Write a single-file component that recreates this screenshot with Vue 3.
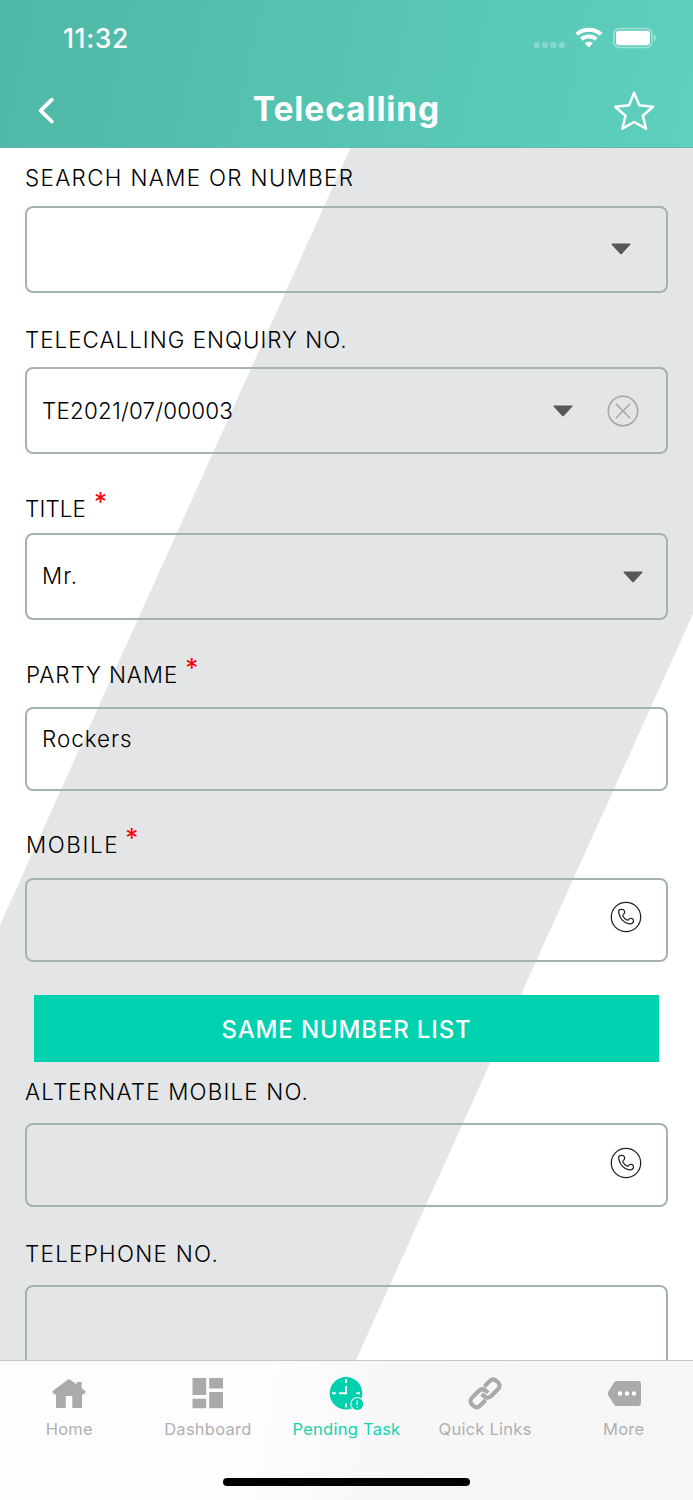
<script setup>
const fields = [
  { id: 'search', label: 'SEARCH NAME OR NUMBER', value: '', icon: 'caret' },
  { id: 'enquiry', label: 'TELECALLING ENQUIRY NO.', value: 'TE2021/07/00003', icon: 'caret', clear: true },
  { id: 'title', label: 'TITLE', required: true, value: 'Mr.', icon: 'caret' },
  { id: 'party', label: 'PARTY NAME', required: true, value: 'Rockers' },
  { id: 'mobile', label: 'MOBILE', required: true, value: '', icon: 'phone', button: 'SAME NUMBER LIST' },
  { id: 'alternate', label: 'ALTERNATE MOBILE NO.', value: '', icon: 'phone' },
  { id: 'telephone', label: 'TELEPHONE NO.', value: '' },
]
const tabs = [
  { id: 'home', label: 'Home' },
  { id: 'dashboard', label: 'Dashboard' },
  { id: 'pending', label: 'Pending Task', active: true },
  { id: 'links', label: 'Quick Links' },
  { id: 'more', label: 'More' },
]
</script>

<template>
  <div class="screen">
    <header class="header">
      <div class="status">
        <span class="time">11:32</span>
        <svg class="status-icons" width="126" height="24" viewBox="0 0 126 24" fill="#fff">
          <g opacity=".25">
            <rect x="3.7" y="16" width="6" height="6" rx="1.8" />
            <rect x="12" y="16" width="6" height="6" rx="1.8" />
            <rect x="20.4" y="16" width="6" height="6" rx="1.8" />
            <rect x="28.8" y="16" width="6" height="6" rx="1.8" />
          </g>
          <g fill="none" stroke="#fff" stroke-width="4">
            <path d="M46.8 8.2C53.5 2.2 64.2 2.2 70.9 8.2" />
            <path d="M51.4 13.2C55.5 9.5 62.2 9.5 66.3 13.2" />
          </g>
          <path d="M54.9 17.200C57 15.400 60.700 15.400 62.800 17.200L58.850 21.400Z" />
          <rect x="83.9" y="2.5" width="38" height="19" rx="5.5" fill="none" stroke="#fff" stroke-opacity=".42" stroke-width="1.5" />
          <rect x="86" y="4.8" width="34" height="14.4" rx="3" />
          <path d="M123.800 8.500c2.600 1.300 2.600 5.800 0 7z" opacity=".5" />
        </svg>
      </div>
      <div class="navbar">
        <svg class="back" width="20" height="30" viewBox="0 0 20 30" fill="none" stroke="#fff" stroke-width="3.8" stroke-linecap="round" stroke-linejoin="round">
          <path d="M14.8 3.7L3.6 14.6L14.8 25.5" />
        </svg>
        <h1>Telecalling</h1>
        <svg class="star" width="44" height="44" viewBox="0 0 44 44" fill="none" stroke="#fff" stroke-width="2.5" stroke-linejoin="round">
          <path d="M22.1 3.8L27.3 16.3L41 17.8L30.8 26.8L34.1 39.7L22.1 33L10.3 39.7L13.5 26.8L3.2 17.8L17 16.3Z" />
        </svg>
      </div>
    </header>

    <main class="form">
      <section v-for="f in fields" :key="f.id" class="field" :class="f.id">
        <div class="label">
          <span class="caption">{{ f.label }}</span>
          <span v-if="f.required" class="required">*</span>
        </div>
        <div class="box">
          <span class="value">{{ f.value }}</span>
          <svg v-if="f.icon === 'caret'" class="caret" width="20" height="12" viewBox="0 0 20 12">
            <path d="M1.200.500H18.800Q20.300.500 19.200 1.700L11 10.700Q10 11.800 9 10.700L.800 1.700Q-.300.500 1.200.500Z" fill="#575757" />
          </svg>
          <svg v-if="f.clear" class="clear" width="32" height="32" viewBox="0 0 32 32" fill="none" stroke="#a5a5a5" stroke-width="1.5" stroke-linecap="round">
            <circle cx="16" cy="16" r="14.7" />
            <path d="M9.3 9.3L22.7 22.7M22.7 9.3L9.3 22.7" />
          </svg>
          <svg v-if="f.icon === 'phone'" class="phone" width="32" height="32" viewBox="0 0 32 32" fill="none" stroke="#222" stroke-width="1.25" stroke-linejoin="round">
            <circle cx="16" cy="16" r="14.7" />
            <path d="M8.8 12.2C7.9 9.3 9.8 8 12.1 8.300C14.300 8.500 15.100 10.600 14.400 12.200C13.900 13.200 12.400 13.700 12.900 14.900C13.800 16.800 15.400 18.600 17.200 19.200C18.200 19.500 18.600 17.900 19.900 17.500C22.300 16.900 24 18.300 23.400 20.600C22.900 22.600 21.200 23.100 19 22.800C13.800 22 9.700 17.300 8.800 12.200Z" />
          </svg>
        </div>
        <button v-if="f.button" class="action"><span>{{ f.button }}</span></button>
      </section>
    </main>

    <footer class="tabbar">
      <nav class="tabs">
        <a v-for="t in tabs" :key="t.id" class="tab" :class="[t.id, { active: t.active }]">
          <svg class="tab-icon" width="36" height="36" viewBox="0 0 36 36" fill="#aaa">
            <path v-if="t.id === 'home'" d="M16.800 2.800Q18 1.900 19.200 2.800L25.700 7.500V5H30.700V11.200L34 13.800Q35.200 15 34 16.200Q33 17.600 31 17.500V31H21.300V19H14.800V31H5V17.500Q3 17.600 2 16.200Q.800 15 2 13.800Z" />
            <path v-if="t.id === 'dashboard'" d="M2.500 1H16.200V18.100H2.500ZM19.200 1H33V11.400H19.200ZM19.200 15H33V31.300H19.200ZM2.500 21.800H16.200V31.300H2.500Z" />
            <g v-if="t.id === 'pending'">
              <circle cx="18" cy="16.3" r="16.3" fill="#00d0ad" />
              <path d="M18 2.200V6M4 16.300H7.700M28.200 16.300H32M18 26.600V30.200M18 9V16.300H11" fill="none" stroke="#f9f9fa" stroke-width="2" />
              <circle cx="29.3" cy="27" r="7" fill="#fafafb" />
              <circle cx="29.3" cy="27" r="5.9" fill="#00d0ad" />
              <path d="M29.300 23.200V28M29.300 29.500V31" stroke="#fff" stroke-width="1.3" />
            </g>
            <g v-if="t.id === 'links'" fill="none" stroke="#aaa" stroke-width="4.2" stroke-linejoin="round">
              <path d="M17.300 9.600L22.400 4.400Q25.500 0.700 29.700 4.200Q34.700 8 31.100 12L24 19.200Q20.200 22.300 16.600 18.700L14.800 16.900" />
              <path d="M18.700 23.100L13.500 28.300Q9.700 32.300 6.100 28.600Q1.300 24.500 5.100 20.600L12 13.700Q15.900 10.600 19.300 14.100L21 15.900" />
            </g>
            <g v-if="t.id === 'more'">
              <path d="M10.500 3.900H31.700Q35 3.900 35 7V25.700Q35 28.900 31.700 28.900H10.500Q9 28.900 8 27.400L2.100 18Q1.300 16.400 2.100 14.900L8 5.400Q9 3.900 10.500 3.900Z" />
              <g fill="#fff"><circle cx="14" cy="16.5" r="2.2" /><circle cx="21" cy="16.5" r="2.2" /><circle cx="28" cy="16.5" r="2.2" /></g>
            </g>
          </svg>
          <span class="tab-label">{{ t.label }}</span>
        </a>
      </nav>
      <div class="home-indicator"></div>
    </footer>
  </div>
</template>

<style>
body { margin: 0; background: #fff; }
</style>

<style scoped>
.screen {
  display: flex;
  flex-direction: column;
  width: 693px;
  height: 1500px;
  overflow: hidden;
  background: #fff;
  font-family: Inter, "Liberation Sans", sans-serif;
}
.header {
  box-sizing: border-box;
  flex: none;
  height: 148px;
  background: linear-gradient(102deg, #4fb7a5 0%, #55c2af 42%, #5fd0be 100%);
  border-bottom: 1px solid #65b7a9;
  color: #fff;
}
.status {
  display: flex;
  justify-content: space-between;
  align-items: center;
  height: 76px;
  padding: 0 37px 0 63px;
}
.time { font-size: 26.5px; font-weight: 500; letter-spacing: .6px; }
.navbar {
  display: grid;
  grid-template-columns: 80px 1fr 80px;
  align-items: center;
  height: 70px;
}
.back { margin: -1px 0 0 37px; }
h1 {
  margin: 0;
  padding-bottom: 4px;
  text-align: center;
  font-size: 33.5px;
  font-weight: 700;
  line-height: 40px;
  letter-spacing: .9px;
}
.star { margin-left: -1px; }

.form {
  box-sizing: border-box;
  flex: none;
  height: 1212px;
  overflow: hidden;
  padding: 15px 25px 0;
  background: #e4e5e7;
  isolation: isolate;
  position: relative;
}
/* white corners on both sides of the slanted grey band */
.form::before {
  content: "";
  position: absolute;
  inset: 0;
  z-index: -1;
  background: #fff;
  clip-path: polygon(0 0, 350.5px 0, 0 777px, 0 1212px, 356px 1212px, 693px 466px, 693px 1212px, 0 1212px);
}
.label {
  display: flex;
  height: 30px;
  line-height: 30px;
  font-size: 22.4px;
  font-weight: 360;
  color: #000;
  white-space: nowrap;
}
.required {
  margin-left: 8px;
  color: #f00;
  font-size: 26px;
  font-weight: 400;
  line-height: 15px;
}
.box {
  box-sizing: border-box;
  display: flex;
  align-items: center;
  height: 87px;
  padding: 0 15px;
  border: 2px solid #a3b3af;
  border-radius: 8px;
  font-size: 22.4px;
  font-weight: 360;
  color: #000;
}
.value { flex: 1; }
.search .caption { letter-spacing: 1.35px; }
.search .box { margin-top: 13px; }
.enquiry { margin-top: 32px; }
.enquiry .caption { letter-spacing: 1px; }
.enquiry .box { margin-top: 12px; }
.enquiry .value { letter-spacing: .2px; }
.title { margin-top: 40px; }
.title .caption { letter-spacing: .15px; }
.title .box { margin-top: 9px; }
.title .value { padding-bottom: 3px; letter-spacing: 1px; }
.party { margin-top: 40px; }
.party .caption { margin-left: 1px; letter-spacing: .9px; }
.party .required { margin-left: 7px; }
.party .box { margin-top: 17px; height: 84px; padding-bottom: 22px; }
.party .value { letter-spacing: 1px; }
.mobile { margin-top: 39px; }
.mobile .caption { margin-left: 1px; letter-spacing: 1.6px; }
.mobile .required { margin-left: 6px; }
.mobile .box { margin-top: 18px; height: 84px; }
.alternate { margin-top: 15px; }
.alternate .caption { letter-spacing: 1.18px; }
.alternate .box { margin-top: 16px; height: 84px; }
.telephone { margin-top: 32px; }
.telephone .caption { letter-spacing: 1.3px; }
.telephone .box { margin-top: 16px; height: 84px; }
.search .caret { margin: -2px 20px 0 0; }
.enquiry .caret { margin-right: 34px; }
.title .caret { margin-right: 8px; }
.clear { margin-right: 12px; }
.phone { margin: -6px 9px 0 0; }
.alternate .phone { margin-top: -4px; }
.action {
  display: flex;
  align-items: center;
  justify-content: center;
  width: 625px;
  height: 67px;
  margin: 33px 0 0 9px;
  padding: 2px 0 0;
  border: 0;
  background: #00d1ae;
  color: #fff;
  font: 550 24px/30px Inter, "Liberation Sans", sans-serif;
  letter-spacing: .85px;
}

.tabbar {
  box-sizing: border-box;
  flex: none;
  height: 140px;
  border-top: 1px solid #c3c5c6;
  background: linear-gradient(100deg, #fdfdff 0%, #fdfdff 38%, #f7f7f8 56%, #f6f6f6 100%);
}
.tabs { display: grid; grid-template-columns: repeat(5, 1fr); height: 117px; }
.tab { display: flex; flex-direction: column; align-items: center; padding-top: 16px; color: #b0b0b0; }
.tab.active { color: #14d2b0; }
.tab-icon { overflow: visible; }
.tab-label { margin-top: 6px; font-size: 16.5px; line-height: 20px; letter-spacing: .25px; white-space: nowrap; }
.home-indicator { width: 247px; height: 8px; margin: 0 auto; border-radius: 4px; background: #000; }
</style>
